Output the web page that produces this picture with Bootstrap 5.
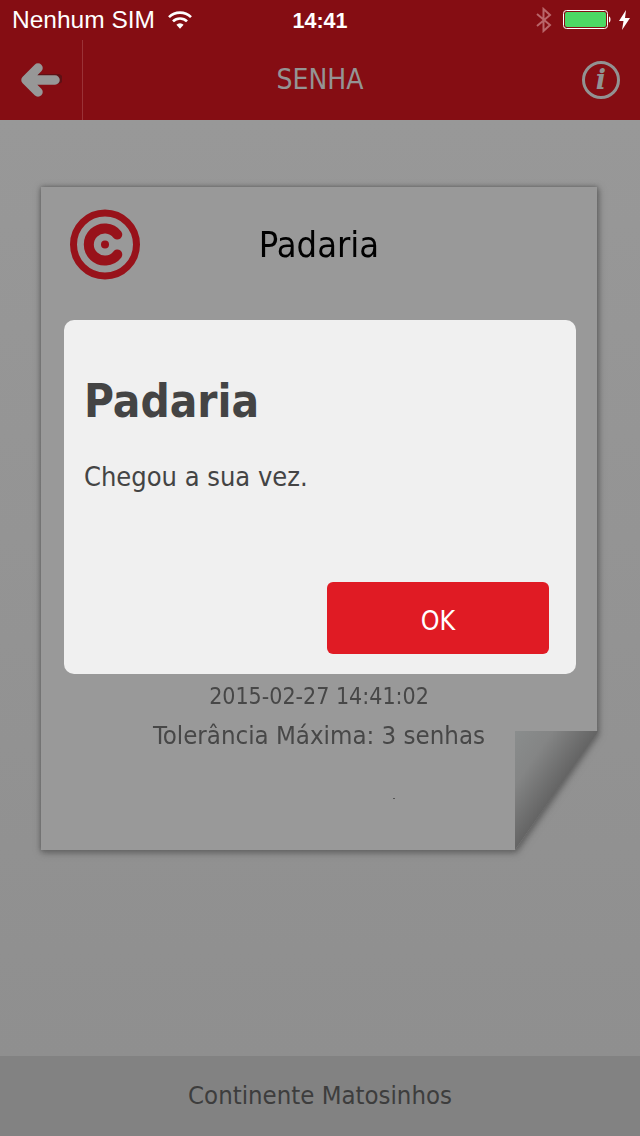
<!DOCTYPE html>
<html lang="pt">
<head>
<meta charset="utf-8">
<title>Senha</title>
<link href="https://cdn.jsdelivr.net/npm/bootstrap@5.3.0/dist/css/bootstrap.min.css" rel="stylesheet">
<style>
html,body{height:100%;margin:0}
body{width:640px;height:1136px;overflow:hidden;font-family:"DejaVu Sans Condensed","DejaVu Sans",sans-serif;font-stretch:condensed;background:#949494;position:relative}
.screen{height:1136px}
.head-bar{background:#850d13}
.status-row{height:40px;padding:0 8px 0 12px;color:#fff;font-family:"Liberation Sans",sans-serif;font-stretch:normal;font-size:24.500px;position:relative}
.status-time{position:absolute;left:0;right:0;text-align:center;font-size:21.500px;top:8px;line-height:26px;font-weight:700}
.status-wifi{margin-left:12px}
.status-batt{margin-left:10px}
.status-bolt{margin-left:5px}
.nav-row{height:80px;padding:0}
.back-cell{width:83px;height:80px;border-right:1px solid #9b3237;padding-left:20px}
.nav-title{font-size:28px;color:#949494;position:absolute;left:0;right:0;text-align:center;line-height:80px}
.info-btn{width:38px;height:38px;border:3px solid #929292;border-radius:50%;margin-right:20px;margin-left:auto;color:#929292;font:italic 700 27px/31px "DejaVu Serif",serif;text-align:center}
.body-zone{height:936px;padding:67px 43px 0 41px;background:linear-gradient(#989898,#8f8f8f)}
.paper-shadow{filter:drop-shadow(0 0 2px #666) drop-shadow(1px 2px 3px #606060);position:relative;height:663px}
.paper{height:663px;background:#999;clip-path:polygon(0 0,100% 0,100% 544px,474px 100%,0 100%);color:#474747;text-align:center;padding:22px 29px 0}
.paper-name{font-size:36px;color:#000;line-height:72px;position:relative}
.paper-name svg{position:absolute;left:-1px;top:0}
.paper-date{font-size:23px;line-height:39px;margin-top:396px}
.paper-tol{font-size:25.600px;line-height:39px}
.fold{position:absolute;left:474px;top:544px}
.speck{width:2px;height:1px;background:#555;margin:43px 0 0 323px}
.foot-bar{height:80px;background:#828282;color:#3d3d3d;font-size:25.500px;padding-bottom:2px}
.dialog-box{position:absolute;left:64px;top:320px;width:512px;height:354px;background:#f0f0f0;border:0;border-radius:10px;color:#444;box-shadow:none}
.dialog-box .modal-body{padding:52px 20px 0;flex:none}
.dialog-title{font-size:45.500px;font-weight:700;line-height:60px;margin:0 0 28px;color:#444}
.dialog-text{font-size:27px;line-height:34px;margin:0}
.dialog-box .modal-footer{border:0;padding:0 27px 20px 0;margin-top:auto}
.ok-btn{width:222px;height:72px;margin:0;background:#e01b24;border:0;border-radius:6px;color:#fff;font-size:26.500px;line-height:78px;padding:0}
.ok-btn:hover{background:#e01b24;color:#fff}
</style>
</head>
<body>
<div class="screen d-flex flex-column">
  <header class="head-bar">
    <div class="status-row d-flex align-items-center">
      <span>Nenhum SIM</span>
      <svg class="status-wifi" width="26" height="20" viewBox="0 0 26 20" aria-hidden="true"><g fill="none" stroke="#fff" stroke-width="2.6"><path d="M2 7.200a15.500 15.500 0 0 1 22 0"/><path d="M6 11.400a9.800 9.800 0 0 1 14 0"/></g><path d="M9.400 14.800a5 5 0 0 1 7.200 0L13 18.800z" fill="#fff"/></svg>
      <span class="status-time">14:41</span>
      <svg class="ms-auto" width="18" height="26" viewBox="0 0 18 26" aria-hidden="true"><path d="M2 7l13 11-6.500 6V2L15 8 2 19" fill="none" stroke="#b9666a" stroke-width="2"/></svg>
      <svg class="status-batt" width="50" height="20" viewBox="0 0 50 20" aria-hidden="true"><rect x=".5" y=".5" width="44" height="18" rx="3" fill="none" stroke="#fff"/><rect x="2" y="2" width="41" height="15" rx="2" fill="#4cd964"/><path d="M46 6.500c2 0 2 6 0 6z" fill="#fff"/></svg>
      <svg class="status-bolt" width="14" height="20" viewBox="0 0 14 20" aria-hidden="true"><path d="M8 0L1 11h4.500L4 20l8-12H7z" fill="#fff"/></svg>
    </div>
    <nav class="navbar nav-row position-relative">
      <div class="back-cell d-flex align-items-center">
        <svg width="42" height="38" viewBox="0 0 42 38" aria-hidden="true"><path d="M7 18h31" fill="none" stroke="#5e1014" stroke-width="10" stroke-linecap="round"/><path d="M18 7L6 19l12 12M7 19h28" fill="none" stroke="#979797" stroke-width="9.500" stroke-linecap="round" stroke-linejoin="round"/></svg>
      </div>
      <span class="nav-title">SENHA</span>
      <span class="info-btn position-relative">i</span>
    </nav>
  </header>
  <main class="body-zone">
    <div class="paper-shadow">
      <div class="paper">
        <div class="paper-name">
          <svg width="72" height="72" viewBox="0 0 72 72" aria-hidden="true"><circle cx="36" cy="35.500" r="31.500" fill="none" stroke="#98121a" stroke-width="7"/><path d="M48.300 25.500a16 16 0 1 0 0 20" fill="none" stroke="#98121a" stroke-width="10" stroke-linecap="round"/><circle cx="36" cy="35.500" r="4" fill="#98121a"/></svg>
          Padaria
        </div>
        <div class="paper-date">2015-02-27 14:41:02</div>
        <div class="paper-tol">Tolerância Máxima: 3 senhas</div>
        <div class="speck"></div>
      </div>
      <svg class="fold" width="84" height="120" viewBox="0 0 84 120" aria-hidden="true"><defs><linearGradient id="foldGrad" gradientUnits="userSpaceOnUse" x1="0" y1="0" x2="56" y2="39"><stop offset="0" stop-color="#8a8d8d"/><stop offset=".45" stop-color="#848585"/><stop offset="1" stop-color="#646464"/></linearGradient></defs><path d="M0 0H83L0 119z" fill="url(#foldGrad)"/></svg>
    </div>
  </main>
  <footer class="foot-bar mt-auto d-flex align-items-center justify-content-center">Continente Matosinhos</footer>
</div>
<div class="modal-content dialog-box">
  <div class="modal-body">
    <h2 class="dialog-title">Padaria</h2>
    <p class="dialog-text">Chegou a sua vez.</p>
  </div>
  <div class="modal-footer">
    <button type="button" class="btn ok-btn">OK</button>
  </div>
</div>
<script src="https://cdn.jsdelivr.net/npm/bootstrap@5.3.0/dist/js/bootstrap.bundle.min.js"></script>
</body>
</html>
